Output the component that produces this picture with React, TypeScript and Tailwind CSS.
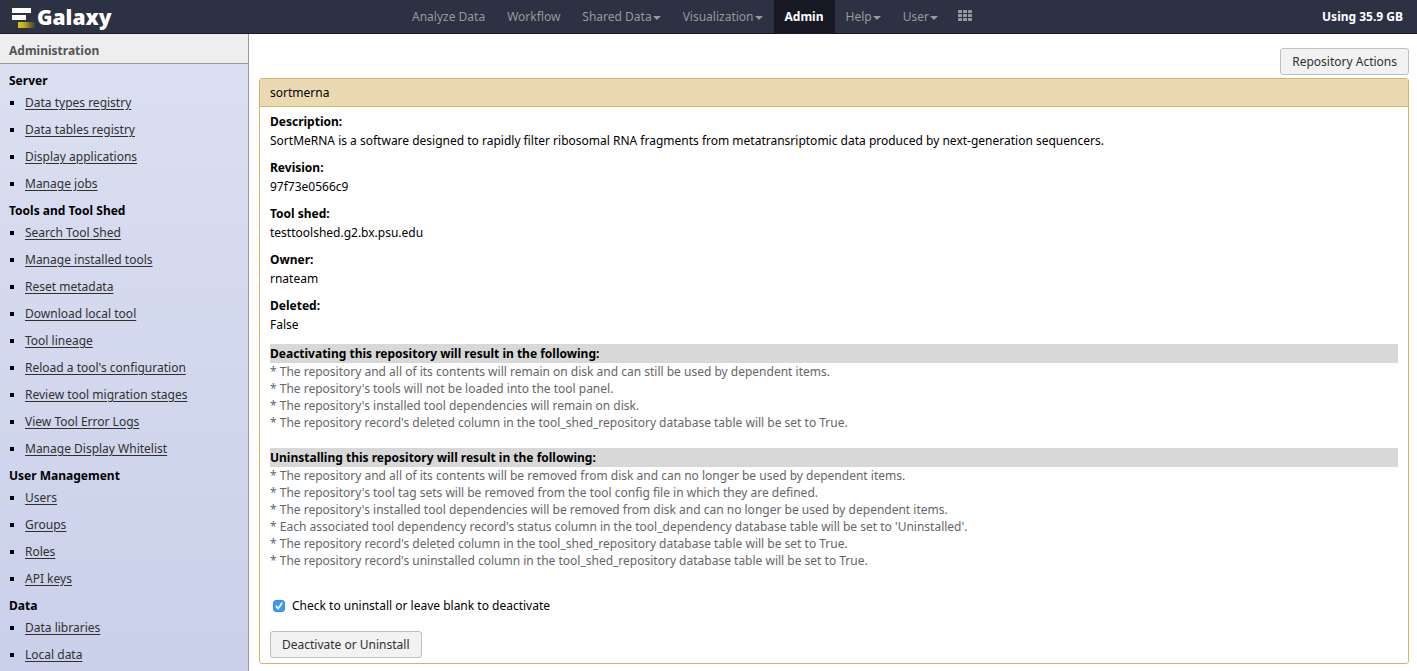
import React from "react";

type NavItem = { label: string; menu?: boolean; active?: boolean };

const navItems: NavItem[] = [
  { label: "Analyze Data" },
  { label: "Workflow" },
  { label: "Shared Data", menu: true },
  { label: "Visualization", menu: true },
  { label: "Admin", active: true },
  { label: "Help", menu: true },
  { label: "User", menu: true },
];

const sections = [
  {
    title: "Server",
    links: ["Data types registry", "Data tables registry", "Display applications", "Manage jobs"],
  },
  {
    title: "Tools and Tool Shed",
    links: [
      "Search Tool Shed",
      "Manage installed tools",
      "Reset metadata",
      "Download local tool",
      "Tool lineage",
      "Reload a tool's configuration",
      "Review tool migration stages",
      "View Tool Error Logs",
      "Manage Display Whitelist",
    ],
  },
  { title: "User Management", links: ["Users", "Groups", "Roles", "API keys"] },
  { title: "Data", links: ["Data libraries", "Local data"] },
];

const details = [
  {
    label: "Description:",
    value:
      "SortMeRNA is a software designed to rapidly filter ribosomal RNA fragments from metatransriptomic data produced by next-generation sequencers.",
  },
  { label: "Revision:", value: "97f73e0566c9" },
  { label: "Tool shed:", value: "testtoolshed.g2.bx.psu.edu" },
  { label: "Owner:", value: "rnateam" },
  { label: "Deleted:", value: "False" },
];

const deactivateNotes = [
  "The repository and all of its contents will remain on disk and can still be used by dependent items.",
  "The repository's tools will not be loaded into the tool panel.",
  "The repository's installed tool dependencies will remain on disk.",
  "The repository record's deleted column in the tool_shed_repository database table will be set to True.",
];

const uninstallNotes = [
  "The repository and all of its contents will be removed from disk and can no longer be used by dependent items.",
  "The repository's tool tag sets will be removed from the tool config file in which they are defined.",
  "The repository's installed tool dependencies will be removed from disk and can no longer be used by dependent items.",
  "Each associated tool dependency record's status column in the tool_dependency database table will be set to 'Uninstalled'.",
  "The repository record's deleted column in the tool_shed_repository database table will be set to True.",
  "The repository record's uninstalled column in the tool_shed_repository database table will be set to True.",
];

function Logo() {
  return (
    <a href="#" className="flex h-full items-center gap-[3px] pl-3 text-white">
      <svg width="24" height="22" viewBox="0 0 24 22" aria-hidden="true" className="-mr-0.5">
        <defs>
          <linearGradient id="logo-bar" x1="0" x2="1">
            <stop offset="0" stopColor="#d8c50c" />
            <stop offset="0.3" stopColor="#c5b31a" />
            <stop offset="1" stopColor="#2c3143" />
          </linearGradient>
        </defs>
        <rect x="0" y="2" width="19" height="5" fill="#fff" />
        <rect x="0" y="9" width="14" height="5" fill="#fff" />
        <rect x="6" y="16" width="18" height="6" fill="url(#logo-bar)" />
      </svg>
      <span className="text-[21px] font-black leading-8">Galaxy</span>
    </a>
  );
}

function Caret() {
  return (
    <svg width="8" height="4" viewBox="0 0 8 4" className="mt-0.5" aria-hidden="true">
      <path d="M0 0h8L4 4z" fill="currentColor" />
    </svg>
  );
}

function GridIcon() {
  return (
    <svg width="15" height="12" viewBox="0 0 15 12" fill="currentColor" aria-hidden="true">
      {[0, 4, 8].map((y) =>
        [0, 5, 10].map((x) => <rect key={`${x}-${y}`} x={x} y={y} width="4" height="3" rx="0.5" />)
      )}
    </svg>
  );
}

function Masthead() {
  return (
    <header className="flex h-[34px] border-b border-[#1a1625] bg-[#2c3143]">
      <div className="w-[401px] shrink-0">
        <Logo />
      </div>
      <nav className="flex">
        {navItems.map((item) => (
          <a
            key={item.label}
            href="#"
            className={
              item.active
                ? "flex items-center bg-[#181924] px-[11px] font-bold text-white"
                : "flex items-center gap-px px-[11px] text-[#999999]"
            }
          >
            {item.label}
            {item.menu && <Caret />}
          </a>
        ))}
        <a
          href="#"
          aria-label="Saved visualizations"
          className="flex items-start px-[9px] pt-[10px] text-[#999999]"
        >
          <GridIcon />
        </a>
      </nav>
      <div className="ml-auto flex items-center pr-[14px] font-bold text-white">Using 35.9 GB</div>
    </header>
  );
}

function Sidebar() {
  return (
    <aside className="flex w-[249px] shrink-0 flex-col border-r border-[#999999] bg-linear-to-b from-[#dbe0f1] to-[#cad0ea]">
      <h2 className="h-[30px] border-b border-[#999999] bg-[#eeeeee] px-[9px] pt-2 font-bold leading-[17px] text-[#555555]">
        Administration
      </h2>
      <div className="pt-[3px]">
        {sections.map((section) => (
          <section key={section.title} className="pt-[5px]">
            <h3 className="px-[9px] font-bold leading-[17px]">{section.title}</h3>
            <ul>
              {section.links.map((link) => (
                <li key={link} className="flex h-[27px] items-center gap-[11px] pl-[10px]">
                  <span className="size-1 bg-black" />
                  <a href="#" className="text-[#303030] underline underline-offset-2">
                    {link}
                  </a>
                </li>
              ))}
            </ul>
          </section>
        ))}
      </div>
    </aside>
  );
}

function Notes({ title, items }: { title: string; items: string[] }) {
  return (
    <section className="pb-[17px]">
      <h3 className="bg-[#d8d8d8] font-bold leading-[19px]">{title}</h3>
      <ul className="leading-[17px] text-[#666666]">
        {items.map((item) => (
          <li key={item}>* {item}</li>
        ))}
      </ul>
    </section>
  );
}

const buttonStyle =
  "h-[27px] rounded-[3px] border border-[#bfbfbf] bg-[#f2f2f2] px-[11px] text-[#303030]";

export default function App() {
  return (
    <div className="flex min-h-screen flex-col bg-white font-['Noto_Sans',sans-serif] text-[12px] leading-[17px] text-black">
      <Masthead />
      <div className="flex flex-1">
        <Sidebar />
        <main className="flex min-w-0 flex-1 flex-col pl-[10px] pr-2 pt-[14px]">
          <button type="button" className={`${buttonStyle} mb-[3px] self-end`}>
            Repository Actions
          </button>
          <form className="rounded-[3px] border border-[#d8b365]" onSubmit={(e) => e.preventDefault()}>
            <h1 className="border-b border-[#d8b365] bg-[#ebd9b2] px-[10px] py-[5px] leading-[17px]">sortmerna</h1>
            <div className="px-[10px] py-[5px]">
              <dl className="flex flex-col gap-2 pb-[10px] leading-[19px]">
                {details.map((d) => (
                  <div key={d.label}>
                    <dt className="font-bold">{d.label}</dt>
                    <dd>{d.value}</dd>
                  </div>
                ))}
              </dl>
              <Notes title="Deactivating this repository will result in the following:" items={deactivateNotes} />
              <Notes title="Uninstalling this repository will result in the following:" items={uninstallNotes} />
              <label className="flex items-center gap-[7px] pb-[17px] pl-[3px] pt-[11px]">
                <span className="grid size-3 place-items-center">
                  <input
                    type="checkbox"
                    defaultChecked
                    className="peer col-start-1 row-start-1 size-3 appearance-none rounded-[3px] border border-[#9a9a9a] bg-white checked:border-[#2f8bfa] checked:bg-[#3b99fc]"
                  />
                  <svg
                    viewBox="0 0 12 12"
                    className="pointer-events-none invisible col-start-1 row-start-1 size-3 peer-checked:visible"
                    fill="none"
                    stroke="#fff"
                    strokeWidth="1.7"
                    strokeLinecap="round"
                    strokeLinejoin="round"
                    aria-hidden="true"
                  >
                    <path d="M3.2 6.4l2 2.2 3.6-5.4" />
                  </svg>
                </span>
                Check to uninstall or leave blank to deactivate
              </label>
              <button type="submit" className={buttonStyle}>
                Deactivate or Uninstall
              </button>
            </div>
          </form>
        </main>
      </div>
    </div>
  );
}
